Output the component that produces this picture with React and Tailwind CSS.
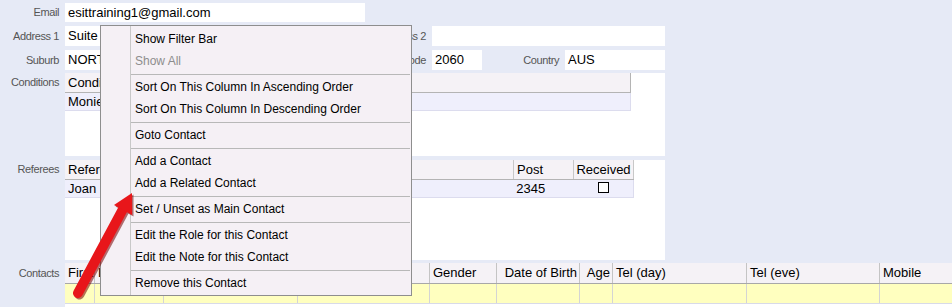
import React from "react";

const Label = ({ children, w = "w-[65px]", lh = "leading-[20px]" }) => (
  <div className={`${w} ${lh} shrink-0 pr-[6px] text-right text-[11px] tracking-[-0.4px] text-[#555]`}>{children}</div>
);

const Field = ({ children, w }) => (
  <div className={`${w} h-full shrink-0 bg-white pl-[3px] text-[13px] leading-[20px] text-black overflow-hidden whitespace-nowrap`}>{children}</div>
);

const menuItems = [
  { t: "Show Filter Bar" },
  { t: "Show All", disabled: true },
  { sep: true },
  { t: "Sort On This Column In Ascending Order" },
  { t: "Sort On This Column In Descending Order" },
  { sep: true },
  { t: "Goto Contact" },
  { sep: true },
  { t: "Add a Contact" },
  { t: "Add a Related Contact" },
  { sep: true },
  { t: "Set / Unset as Main Contact" },
  { sep: true },
  { t: "Edit the Role for this Contact" },
  { t: "Edit the Note for this Contact" },
  { sep: true },
  { t: "Remove this Contact" },
];

const contactCols = [
  { t: "First Name", w: "w-[30px]" },
  { t: "Last Name", w: "w-[69px]" },
  { t: "Preferred Name", w: "w-[134px]" },
  { t: "Role", w: "w-[132px]" },
  { t: "Gender", w: "w-[67px]" },
  { t: "Date of Birth", w: "w-[83px]", right: true },
  { t: "Age", w: "w-[33px]", right: true },
  { t: "Tel (day)", w: "w-[134px]" },
  { t: "Tel (eve)", w: "w-[133px]" },
  { t: "Mobile", w: "w-[110px]" },
];

export default function App() {
  return (
    <div className="relative w-[952px] h-[307px] overflow-hidden bg-[#e6eaf6] font-['Liberation_Sans',Arial,sans-serif]">
      <div className="flex flex-col pt-[3px]">
        {/* Email */}
        <div className="flex h-[19px]">
          <Label lh="leading-[19px]">Email</Label>
          <Field w="w-[300px]">esittraining1@gmail.com</Field>
        </div>
        {/* Address */}
        <div className="flex h-[20px] mt-[4px]">
          <Label>Address 1</Label>
          <Field w="w-[300px]">Suite 1, 100 Miller Street</Field>
          <Label w="w-[67px]">Address 2</Label>
          <Field w="w-[233px]"></Field>
        </div>
        {/* Suburb */}
        <div className="flex h-[20px] mt-[4px]">
          <Label>Suburb</Label>
          <Field w="w-[300px]">NORTH SYDNEY</Field>
          <Label w="w-[67px]">Postcode</Label>
          <Field w="w-[50px]">2060</Field>
          <Label w="w-[83px]">Country</Label>
          <Field w="w-[100px]">AUS</Field>
        </div>
        {/* Conditions */}
        <div className="flex mt-[3px]">
          <Label lh="leading-[19px]">Conditions</Label>
          <div className="w-[600px] h-[83px] bg-white">
            <div className="w-[566px]">
              <div className="flex h-[20px] bg-[#f5f2f6] border-b border-r border-[#b4b4b4] text-[13px] leading-[19px] text-black">
                <div className="pl-[3px] whitespace-nowrap">Condition</div>
              </div>
              <div className="flex h-[18px] bg-[#efeffc] border-b border-r border-[#dcdcee] text-[13px] leading-[17px] text-black">
                <div className="pl-[3px] whitespace-nowrap">Monie Disease</div>
              </div>
            </div>
          </div>
        </div>
        {/* Referees */}
        <div className="flex mt-[4px]">
          <Label lh="leading-[19px]">Referees</Label>
          <div className="w-[600px] h-[100px] bg-white">
            <div className="w-[569px]">
              <div className="flex h-[20px] bg-[#f5f2f6] border-b border-[#b4b4b4] text-[13px] leading-[19px] text-black">
                <div className="w-[195px] pl-[3px] whitespace-nowrap border-r border-[#c8c8c8]">Referee Name</div>
                <div className="w-[254px] pl-[3px] whitespace-nowrap border-r border-[#c8c8c8]">Address</div>
                <div className="w-[60px] pl-[3px] whitespace-nowrap border-r border-[#c8c8c8]">Post</div>
                <div className="w-[60px] text-center whitespace-nowrap border-r border-[#c8c8c8]">Received</div>
              </div>
              <div className="flex h-[18px] bg-[#efeffc] border-b border-r border-[#dcdcee] text-[13px] leading-[17px] text-black">
                <div className="w-[195px] pl-[3px] whitespace-nowrap">Joan Smith</div>
                <div className="w-[254px]"></div>
                <div className="w-[60px] pl-[3px]">2345</div>
                <div className="w-[60px] flex justify-center pt-[2px]">
                  <div className="w-[11px] h-[11px] border border-black bg-white"></div>
                </div>
              </div>
            </div>
          </div>
        </div>
        {/* Contacts */}
        <div className="flex mt-[3px]">
          <Label lh="leading-[20px]">Contacts</Label>
          <div className="flex-1 h-[44px] bg-white">
            <div className="flex h-[21px] bg-[#f5f2f6] border-b border-[#a8a8a8] text-[13px] leading-[20px] text-black">
              {contactCols.map((c, i) => (
                <div key={i} className={`${c.w} shrink-0 overflow-hidden whitespace-nowrap border-r border-[#c4c4c4] ${c.right ? "text-right pr-[2px]" : "pl-[3px]"}`}>{c.t}</div>
              ))}
            </div>
            <div className="flex h-[20px] bg-[#ffffbf] border-b border-[#d8dae8]">
              {contactCols.map((c, i) => (
                <div key={i} className={`${c.w} shrink-0 border-r border-[#d4d4d4]`}></div>
              ))}
            </div>
          </div>
        </div>
      </div>

      {/* Context menu */}
      <div className="absolute left-[100px] top-[25px] w-[312px] h-[271px] flex bg-[#f5f0f5] border border-[#8e8e8e] text-[12px] text-black">
        <div className="w-[30px] shrink-0 border-r border-[#c8c8c8]"></div>
        <div className="flex-1 flex flex-col pt-[2px]">
          {menuItems.map((m, i) =>
            m.sep ? (
              <div key={i} className="h-[4px] flex items-center pr-[1px]">
                <div className="h-px w-full bg-[#b8b8b8]"></div>
              </div>
            ) : (
              <div key={i} className={`h-[22px] leading-[22px] pl-[4px] whitespace-nowrap ${m.disabled ? "text-[#8d8d8d]" : ""}`}>{m.t}</div>
            )
          )}
        </div>
      </div>

      {/* Red arrow */}
      <svg className="absolute left-0 top-0 pointer-events-none" width="952" height="307" viewBox="0 0 952 307">
        <g transform="translate(1.5,1.5)" opacity="0.55">
          <line x1="78" y1="293" x2="123" y2="209" stroke="#7a0000" strokeWidth="10" strokeLinecap="round" />
          <polygon points="132,193 114,205 132,215" fill="#7a0000" />
        </g>
        <line x1="78" y1="293" x2="123" y2="209" stroke="#e8161a" strokeWidth="10" strokeLinecap="round" />
        <polygon points="132,193 114,205 132,215" fill="#e8161a" />
      </svg>
    </div>
  );
}
